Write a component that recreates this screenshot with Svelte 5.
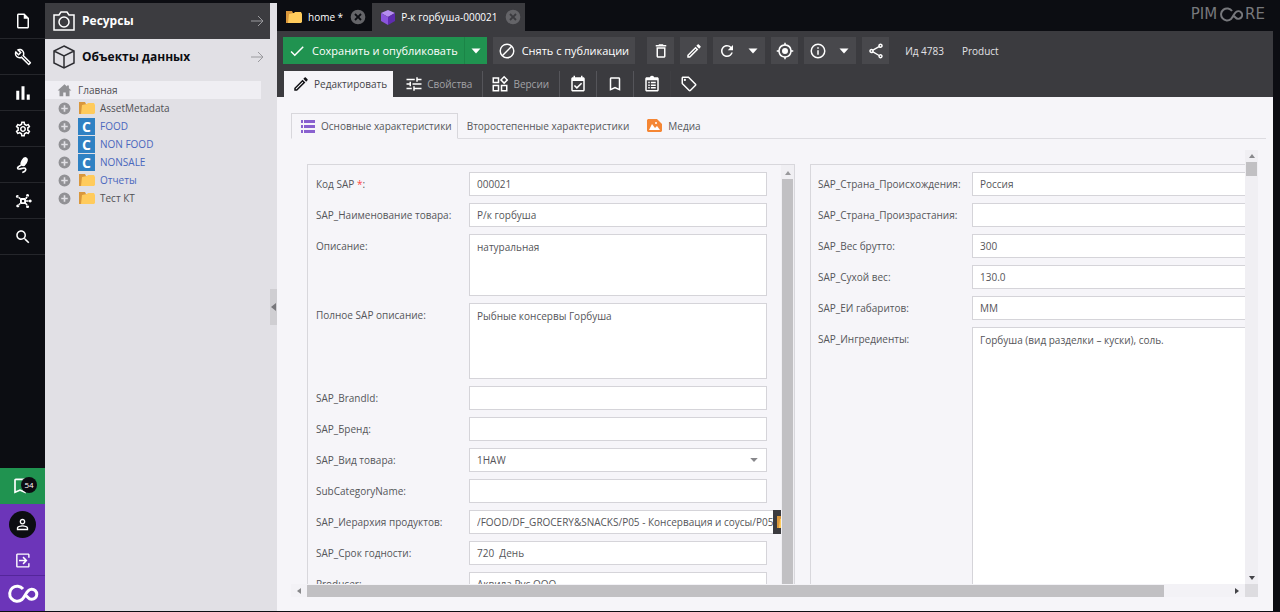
<script lang="ts">
	type Field = {
		id: string;
		label: string;
		value: string;
		kind?: 'text' | 'area' | 'select' | 'relation';
		size?: string;
		required?: boolean;
	};

	// 24x24 icon outlines
	const icons: Record<string, string> = {
		file: 'M14 2H6c-1.1 0-2 .9-2 2v16c0 1.1.9 2 2 2h12c1.1 0 2-.9 2-2V8l-6-6zM6 20V4h7v5h5v11H6z',
		wrench: 'M22.61 18.99l-9.08-9.08c.93-2.34.45-5.1-1.44-7C9.79.61 6.21.4 3.66 2.26L7.5 6.11 6.08 7.52 2.25 3.69C.39 6.23.6 9.82 2.9 12.11c1.86 1.86 4.57 2.35 6.89 1.48l9.11 9.11c.39.39 1.02.39 1.41 0l2.3-2.3c.4-.38.4-1.01 0-1.41zm-3 1.6l-9.46-9.46c-.61.45-1.29.72-2 .82-1.36.2-2.79-.21-3.83-1.25C3.37 9.76 2.93 8.5 3 7.26l3.09 3.09 4.24-4.24-3.09-3.09c1.24-.07 2.49.37 3.44 1.31 1.08 1.08 1.49 2.57 1.24 3.96-.12.71-.42 1.37-.88 1.96l9.45 9.45-.88.89z',
		chart: 'M3 9h4v12H3zM17 14h4v7h-4zM10 3h4v18h-4z',
		gear: 'M19.43 12.98c.04-.32.07-.64.07-.98 0-.34-.03-.66-.07-.98l2.11-1.65c.19-.15.24-.42.12-.64l-2-3.46c-.09-.16-.26-.25-.44-.25-.06 0-.12.01-.17.03l-2.49 1c-.52-.4-1.08-.73-1.69-.98l-.38-2.65C14.46 2.18 14.25 2 14 2h-4c-.25 0-.46.18-.49.42l-.38 2.65c-.61.25-1.17.59-1.69.98l-2.49-1c-.06-.02-.12-.03-.18-.03-.17 0-.34.09-.43.25l-2 3.46c-.13.22-.07.49.12.64l2.11 1.65c-.04.32-.07.65-.07.98 0 .33.03.66.07.98l-2.11 1.65c-.19.15-.24.42-.12.64l2 3.46c.09.16.26.25.44.25.06 0 .12-.01.17-.03l2.49-1c.52.4 1.08.73 1.69.98l.38 2.65c.03.24.24.42.49.42h4c.25 0 .46-.18.49-.42l.38-2.65c.61-.25 1.17-.59 1.69-.98l2.49 1c.06.02.12.03.18.03.17 0 .34-.09.43-.25l2-3.46c.12-.22.07-.49-.12-.64l-2.11-1.65zm-1.98-1.71c.04.31.05.52.05.73 0 .21-.02.43-.05.73l-.14 1.13.89.7 1.08.84-.7 1.21-1.27-.51-1.04-.42-.9.68c-.43.32-.84.56-1.25.73l-1.06.43-.16 1.13-.2 1.35h-1.4l-.19-1.35-.16-1.13-1.06-.43c-.43-.18-.83-.41-1.23-.71l-.91-.7-1.06.43-1.27.51-.7-1.21 1.08-.84.89-.7-.14-1.13c-.03-.31-.05-.54-.05-.74s.02-.43.05-.73l.14-1.13-.89-.7-1.08-.84.7-1.21 1.27.51 1.04.42.9-.68c.43-.32.84-.56 1.25-.73l1.06-.43.16-1.13.2-1.35h1.39l.19 1.35.16 1.13 1.06.43c.43.18.83.41 1.23.71l.91.7 1.06-.43 1.27-.51.7 1.21-1.07.85-.89.7.14 1.13zM12 8c-2.21 0-4 1.79-4 4s1.79 4 4 4 4-1.79 4-4-1.79-4-4-4zm0 6c-1.1 0-2-.9-2-2s.9-2 2-2 2 .9 2 2-.9 2-2 2z',
		hub: 'M8 8h8v8H8zM10.5 10.5v3h3v-3zM15 8l2-3 1.5 1L17 9.5zM7 9L4.5 7l1-1.5L9 8zM7.5 14.5L5 17l1.3 1L9 16zM15 16l2 3 1.5-1-1.5-3.5zM16 11h4v2h-4zM18 2.5a2 2 0 1 0 .1 0zM4.5 4a2 2 0 1 0 .1 0zM5 16.5a2 2 0 1 0 .1 0zM18 17.5a2 2 0 1 0 .1 0zM21.5 10a2 2 0 1 0 .1 0z',
		search: 'M15.5 14h-.79l-.28-.27C15.41 12.59 16 11.11 16 9.5 16 5.91 13.09 3 9.5 3S3 5.91 3 9.5 5.91 16 9.5 16c1.61 0 3.09-.59 4.23-1.57l.27.28v.79l5 4.99L20.49 19l-4.99-5zm-6 0C7.01 14 5 11.99 5 9.5S7.01 5 9.5 5 14 7.01 14 9.5 11.99 14 9.5 14z',
		person: 'M12 5.9a2.1 2.1 0 1 1 0 4.2 2.1 2.1 0 0 1 0-4.2m0 9c2.97 0 6.1 1.46 6.1 2.1v1.1H5.9V17c0-.64 3.13-2.1 6.1-2.1M12 4C9.79 4 8 5.79 8 8s1.79 4 4 4 4-1.79 4-4-1.79-4-4-4zm0 9c-2.67 0-8 1.34-8 4v3h16v-3c0-2.66-5.33-4-8-4z',
		logout: 'M5 2h15c1.1 0 2 .9 2 2v4h-2V4H5v16h15v-4h2v4c0 1.1-.9 2-2 2H5c-1.1 0-2-.9-2-2V4c0-1.1.9-2 2-2zM7 11h8l-3-3 1.5-1.5L19 12l-5.5 5.5L12 16l3-3H7z',
		check: 'M9 16.17L4.83 12l-1.42 1.41L9 19 21 7l-1.41-1.41z',
		block: 'M12 2a10 10 0 1 0 0 20 10 10 0 0 0 0-20zM4 12a8 8 0 0 1 12.9-6.31L5.69 16.9A7.9 7.9 0 0 1 4 12zm8 8a7.9 7.9 0 0 1-4.9-1.69L18.31 7.1A8 8 0 0 1 12 20z',
		trash: 'M6 19c0 1.1.9 2 2 2h8c1.1 0 2-.9 2-2V7H6v12zM8 9h8v10H8V9zm7.5-5l-1-1h-5l-1 1H5v2h14V4z',
		pencil: 'M14.06 9.02l.92.92L5.92 19H5v-.92l9.06-9.06M17.66 3c-.25 0-.51.1-.7.29l-1.83 1.83 3.75 3.75 1.83-1.83c.39-.39.39-1.02 0-1.41l-2.34-2.34c-.2-.2-.45-.29-.71-.29zm-3.6 3.19L3 17.25V21h3.75L17.81 9.94l-3.75-3.75z',
		refresh: 'M17.65 6.35A7.958 7.958 0 0 0 12 4c-4.42 0-7.99 3.58-7.99 8s3.57 8 7.99 8c3.73 0 6.84-2.55 7.73-6h-2.08A5.99 5.99 0 0 1 12 18c-3.31 0-6-2.69-6-6s2.69-6 6-6c1.66 0 3.14.69 4.22 1.78L13 11h7V4l-2.35 2.35z',
		target: 'M12 8a4 4 0 1 0 0 8 4 4 0 0 0 0-8zm8.94 3A8.994 8.994 0 0 0 13 3.06V1h-2v2.06A8.994 8.994 0 0 0 3.06 11H1v2h2.06A8.994 8.994 0 0 0 11 20.94V23h2v-2.06A8.994 8.994 0 0 0 20.94 13H23v-2h-2.06zM12 19a7 7 0 1 1 0-14 7 7 0 0 1 0 14z',
		info: 'M11 7h2v2h-2zm0 4h2v6h-2zm1-9a10 10 0 1 0 0 20 10 10 0 0 0 0-20zm0 18a8 8 0 1 1 0-16 8 8 0 0 1 0 16z',
		share: 'M18 16.08c-.76 0-1.44.3-1.96.77L8.91 12.7c.05-.23.09-.46.09-.7s-.04-.47-.09-.7l7.05-4.11c.54.5 1.25.81 2.04.81 1.66 0 3-1.34 3-3s-1.34-3-3-3-3 1.34-3 3c0 .24.04.47.09.7L8.04 9.81C7.5 9.31 6.79 9 6 9c-1.66 0-3 1.34-3 3s1.34 3 3 3c.79 0 1.5-.31 2.04-.81l7.12 4.16c-.05.21-.08.43-.08.65 0 1.61 1.31 2.92 2.92 2.92s2.92-1.31 2.92-2.92-1.31-2.92-2.92-2.92zM18 4a1 1 0 1 1 0 2 1 1 0 0 1 0-2zM6 13a1 1 0 1 1 0-2 1 1 0 0 1 0 2zm12 7a1 1 0 1 1 0-2 1 1 0 0 1 0 2z',
		tune: 'M2 17v2h7v-2H2zM2 5v2h11V5H2zm11 16v-2h9v-2h-9v-2h-2v6h2zM6 9v2H2v2h4v2h2V9H6zm16 4v-2H10v2h12zm-7-4h2V7h5V5h-5V3h-2v6z',
		widgets: 'M17.5 1L11.9 6.6l5.6 5.6 5.6-5.6L17.5 1zm0 2.8l2.8 2.8-2.8 2.8-2.8-2.8zM2 3v8h9V3H2zm2 2h5v4H4zM2 13v9h9v-9H2zm2 2h5v5H4zM13 13v9h9v-9h-9zm2 2h5v5h-5z',
		calendar: 'M19 3h-1V1h-2v2H8V1H6v2H5c-1.1 0-2 .9-2 2v15c0 1.1.9 2 2 2h14c1.1 0 2-.9 2-2V5c0-1.1-.9-2-2-2zm0 17H5V8h14v12zM10.5 18.6l7-7-1.4-1.4-5.6 5.6-2.6-2.6-1.4 1.4z',
		bookmark: 'M17 3H7c-1.1 0-2 .9-2 2v16l7-3 7 3V5c0-1.1-.9-2-2-2zm0 15l-5-2.18L7 18V5h10v13z',
		clipboard: 'M19 3h-4.18a3 3 0 0 0-5.64 0H5c-1.1 0-2 .9-2 2v15c0 1.1.9 2 2 2h14c1.1 0 2-.9 2-2V5c0-1.1-.9-2-2-2zm0 17H5V7h14zM7 9h2v2H7zm3.5 0H17v2h-6.5zM7 12.5h2v2H7zm3.5 0H17v2h-6.5zM7 16h2v2H7zm3.5 0H17v2h-6.5z',
		tag: 'M21.41 11.58l-9-9C12.05 2.22 11.55 2 11 2H4c-1.1 0-2 .9-2 2v7c0 .55.22 1.05.59 1.42l9 9c.36.36.86.58 1.41.58s1.05-.22 1.41-.59l7-7c.37-.36.59-.86.59-1.41s-.23-1.06-.59-1.42zM13 20.01L4 11V4h7v-.01l9 9-7 7.02zM6.5 5a1.5 1.5 0 1 0 0 3 1.5 1.5 0 0 0 0-3z',
		home: 'M12 2L1 12h3v9h6v-6h4v6h6v-9h3l-4-3.6V4h-3v1.7z',
		plus: 'M12 1a11 11 0 1 0 0 22 11 11 0 0 0 0-22zm6 12.5h-4.5V18h-3v-4.5H6v-3h4.5V6h3v4.5H18z',
		close: 'M12 1a11 11 0 1 0 0 22 11 11 0 0 0 0-22zm5.5 14.5l-2 2L12 14l-3.5 3.5-2-2L10 12 6.5 8.5l2-2L12 10l3.5-3.5 2 2L14 12z',
		down: 'M3 7h18l-9 10z'
	};

	const rail = [
		['file', 'Документы'],
		['wrench', 'Инструменты'],
		['chart', 'Маркетинг'],
		['gear', 'Настройки'],
		['plug', 'Расширения'],
		['hub', 'Datahub'],
		['search', 'Поиск']
	];

	const tree = [
		{ name: 'AssetMetadata', folder: true, link: false },
		{ name: 'FOOD', folder: false, link: true },
		{ name: 'NON FOOD', folder: false, link: true },
		{ name: 'NONSALE', folder: false, link: true },
		{ name: 'Отчеты', folder: true, link: true },
		{ name: 'Тест КТ', folder: true, link: false }
	];

	const iconTabs = [
		['calendar', 'Расписание'],
		['bookmark', 'Закладки'],
		['clipboard', 'Заметки'],
		['tag', 'Теги']
	];

	const mainFields: Field[] = [
		{ id: 'sap-code', label: 'Код SAP', value: '000021', required: true },
		{ id: 'sap-name', label: 'SAP_Наименование товара', value: 'Р/к горбуша' },
		{ id: 'descr', label: 'Описание', value: 'натуральная', kind: 'area', size: 'short' },
		{ id: 'full-descr', label: 'Полное SAP описание', value: 'Рыбные консервы Горбуша', kind: 'area', size: 'medium' },
		{ id: 'brand-id', label: 'SAP_BrandId', value: '' },
		{ id: 'brand', label: 'SAP_Бренд', value: '' },
		{ id: 'kind', label: 'SAP_Вид товара', value: '1HAW', kind: 'select' },
		{ id: 'subcat', label: 'SubCategoryName', value: '' },
		{ id: 'hierarchy', label: 'SAP_Иерархия продуктов', value: '/FOOD/DF_GROCERY&SNACKS/P05 - Консервация и соусы/P05 -', kind: 'relation' },
		{ id: 'shelf-life', label: 'SAP_Срок годности', value: '720  День' },
		{ id: 'producer', label: 'Producer', value: 'Аквила Рус ООО' }
	];

	const sideFields: Field[] = [
		{ id: 'origin', label: 'SAP_Страна_Происхождения', value: 'Россия' },
		{ id: 'growth', label: 'SAP_Страна_Произрастания', value: '' },
		{ id: 'gross', label: 'SAP_Вес брутто', value: '300' },
		{ id: 'dry', label: 'SAP_Сухой вес', value: '130.0' },
		{ id: 'unit', label: 'SAP_ЕИ габаритов', value: 'ММ' },
		{ id: 'ingredients', label: 'SAP_Ингредиенты', value: 'Горбуша (вид разделки – куски), соль.', kind: 'area', size: 'tall' }
	];
</script>

{#snippet icon(name: string, size = 18)}
	<svg width={size} height={size} viewBox="0 0 24 24" fill="currentColor" fill-rule="evenodd" aria-hidden="true">
		{#if name === 'plug'}
			<ellipse cx="13.5" cy="7.5" rx="4" ry="6.5" transform="rotate(30 13.5 7.5)" />
			<path d="M10 12c-4 2-6 3-5 5s8-2.5 10-.5-.5 5-4 5.5" fill="none" stroke="currentColor" stroke-width="2.2" />
		{:else}
			<path d={icons[name]} />
		{/if}
	</svg>
{/snippet}

{#snippet folder()}
	<svg width="18" height="16" viewBox="0 0 18 16" aria-hidden="true">
		<path d="M1 2h6l1 2h7v10H1z" fill="#d9973c" />
		<path d="M4 5l5-1 1-1h6l1 2v8l-1 1H3z" fill="#ffcb5c" />
	</svg>
{/snippet}

{#snippet arrow()}
	<svg class="arrow" width="14" height="14" viewBox="0 0 14 14" fill="none" stroke="currentColor" aria-hidden="true">
		<path d="M1 7h12M8 2l5 5-5 5" />
	</svg>
{/snippet}

{#snippet field(f: Field)}
	<div class="field">
		<label for={f.id}>{f.label}{#if f.required}&nbsp;<span class="required">*</span>{/if}:</label>
		{#if f.kind === 'area'}
			<textarea id={f.id} class={f.size} value={f.value}></textarea>
		{:else if f.kind === 'select'}
			<div class="select">
				<select id={f.id}><option>{f.value}</option></select>
				<span class="caret">{@render icon('down', 10)}</span>
			</div>
		{:else if f.kind === 'relation'}
			<input id={f.id} class="relation" type="text" value={f.value} />
			<button class="open" aria-label="Открыть">{@render folder()}</button>
		{:else}
			<input id={f.id} type="text" value={f.value} />
		{/if}
	</div>
{/snippet}

<div class="app">
	<nav class="rail">
		{#each rail as [name, title]}
			<button class="rail-item" aria-label={title}>{@render icon(name)}</button>
		{/each}
		<div class="rail-bottom">
			<button class="notify" aria-label="Уведомления">
				{@render icon('bookmark', 20)}
				<span class="badge">54</span>
			</button>
			<button class="user" aria-label="Профиль"><span class="avatar">{@render icon('person', 17)}</span></button>
			<button class="logout" aria-label="Выход">{@render icon('logout', 17)}</button>
			<button class="brand" aria-label="Pimcore">
				<svg width="32" height="20" viewBox="0 0 32 20" fill="none" stroke="#fff" stroke-width="3">
					<path d="M16 5A7.5 7.5 0 1 0 15 15.5C17 14 19 9 21 7A5 5 0 1 1 21 13.5L18.5 11" />
				</svg>
			</button>
		</div>
	</nav>

	<aside class="sidebar">
		<button class="panel-head dark">
			<svg width="22" height="22" viewBox="0 0 22 22" fill="none" stroke="#fff" stroke-width="1.5" aria-hidden="true">
				<path d="M1 5h5l2-3h6l2 3h5v15H1z" />
				<circle cx="11" cy="12" r="5" />
			</svg>
			<span>Ресурсы</span>
			{@render arrow()}
		</button>
		<button class="panel-head">
			<svg width="22" height="24" viewBox="0 0 22 24" fill="none" stroke="#2e2e33" stroke-width="1.5" aria-hidden="true">
				<path d="M11 1l10 5v12l-10 5L1 18V6zM1 6l10 5 10-5M11 11v12" />
			</svg>
			<span>Объекты данных</span>
			{@render arrow()}
		</button>
		<ul class="tree">
			<li class="root"><span class="grey">{@render icon('home', 15)}</span><a href="#home">Главная</a></li>
			{#each tree as node}
				<li>
					<span class="grey">{@render icon('plus', 13)}</span>
					{#if node.folder}
						<span class="node-icon">{@render folder()}</span>
					{:else}
						<span class="node-icon class-icon">C</span>
					{/if}
					<a href="#{node.name}" class:link={node.link}>{node.name}</a>
				</li>
			{/each}
		</ul>
		<button class="collapse" aria-label="Свернуть">
			<svg width="5" height="8" viewBox="0 0 5 8"><path d="M5 0v8L0 4z" fill="#77777b" /></svg>
		</button>
	</aside>

	<main class="workspace">
		<header class="tabs">
			<div class="doc-tab">
				{@render folder()}<span>home *</span>
				<button aria-label="Закрыть">{@render icon('close', 16)}</button>
			</div>
			<div class="doc-tab active">
				<svg width="16" height="16" viewBox="0 0 16 16" aria-hidden="true">
					<path d="M8 1l7 3-7 4-7-4z" fill="#b58df0" />
					<path d="M1 4l7 4v8l-7-4z" fill="#8a54dc" />
					<path d="M15 4L8 8v8l7-4z" fill="#5f2bb0" />
				</svg>
				<span>Р-к горбуша-000021</span>
				<button aria-label="Закрыть">{@render icon('close', 16)}</button>
			</div>
			<div class="logo">
				<span>PIM</span>
				<svg width="24" height="15" viewBox="0 0 24 15" fill="none" stroke="currentColor" stroke-width="2">
					<path d="M13 4A6 6 0 1 0 12 12C14 10 15 6.5 17 5A3.8 3.8 0 1 1 16.5 10.5L14.5 8.5" />
				</svg>
				<span>RE</span>
			</div>
		</header>

		<div class="toolbar">
			<div class="actions">
				<div class="group save">
					<button class="wide">{@render icon('check')}<span>Сохранить и опубликовать</span></button>
					<button class="drop" aria-label="Ещё">{@render icon('down', 12)}</button>
				</div>
				<button class="tool text">{@render icon('block')}<span>Снять с публикации</span></button>
				<div class="tools">
					<button class="tool" aria-label="Удалить">{@render icon('trash')}</button>
					<button class="tool" aria-label="Переименовать">{@render icon('pencil')}</button>
					<div class="group">
						<button class="tool" aria-label="Обновить">{@render icon('refresh')}</button>
						<button class="tool more" aria-label="Ещё">{@render icon('down', 12)}</button>
					</div>
					<button class="tool" aria-label="Показать в дереве">{@render icon('target')}</button>
					<div class="group">
						<button class="tool" aria-label="Информация">{@render icon('info')}</button>
						<button class="tool more" aria-label="Ещё">{@render icon('down', 12)}</button>
					</div>
					<button class="tool" aria-label="Поделиться">{@render icon('share')}</button>
				</div>
				<span class="meta">Ид 4783</span>
				<span class="meta">Product</span>
			</div>
			<div class="views">
				<button class="view current">{@render icon('pencil')}<span>Редактировать</span></button>
				<button class="view props">{@render icon('tune')}<span>Свойства</span></button>
				<button class="view versions">{@render icon('widgets')}<span>Версии</span></button>
				{#each iconTabs as [name, title]}
					<button class="view small" aria-label={title}>{@render icon(name)}</button>
				{/each}
			</div>
		</div>

		<section class="content">
			<div class="subtabs">
				<button class="subtab current">
					<svg width="14" height="13" viewBox="0 0 14 13" aria-hidden="true">
						<path d="M0 0h2v3H0zM3 0h11v3H3zM0 5h2v3H0zM3 5h11v3H3zM0 10h2v3H0zM3 10h11v3H3z" fill="#8961cf" />
					</svg>
					<span>Основные характеристики</span>
				</button>
				<button class="subtab"><span>Второстепенные характеристики</span></button>
				<button class="subtab">
					<svg width="15" height="13" viewBox="0 0 15 13" aria-hidden="true">
						<path d="M1 0h9l5 5v7l-1 1H1l-1-1V1z" fill="#f58634" />
						<path d="M2 11l3-6 3 4 2-2 3 4z" fill="#fff" />
						<circle cx="9" cy="4" r="1" fill="#fff" />
					</svg>
					<span>Медиа</span>
				</button>
			</div>

			<div class="scroller">
				<div class="panels">
					<form class="panel main-panel">
						<div class="fields">
							{#each mainFields as f}{@render field(f)}{/each}
						</div>
						<div class="vbar inner">
							<svg width="6" height="4" viewBox="0 0 6 4"><path d="M0 4h6L3 0z" fill="#99999c" /></svg>
							<div class="thumb"></div>
						</div>
					</form>
					<form class="panel side-panel">
						<div class="fields">
							{#each sideFields as f}{@render field(f)}{/each}
						</div>
					</form>
				</div>
				<div class="vbar outer">
					<svg width="6" height="4" viewBox="0 0 6 4"><path d="M0 4h6L3 0z" fill="#88888b" /></svg>
					<div class="thumb"></div>
					<svg width="6" height="4" viewBox="0 0 6 4"><path d="M0 0h6L3 4z" fill="#444448" /></svg>
				</div>
				<div class="hbar">
					<svg width="4" height="6" viewBox="0 0 4 6"><path d="M4 0v6L0 3z" fill="#88888b" /></svg>
					<div class="track"><div class="thumb"></div></div>
					<svg width="4" height="6" viewBox="0 0 4 6"><path d="M0 0v6l4-3z" fill="#444448" /></svg>
				</div>
				<div class="corner"></div>
			</div>
		</section>
	</main>
</div>

<style>
	:global(body) {
		background: #0c0d12;
	}

	.app {
		display: flex;
		height: 100vh;
		box-sizing: border-box;
		padding: 3px 7px 1px 0;
		background: #0c0d12;
		color: #555559;
		font-family: 'Open Sans', 'Noto Sans', sans-serif;
		font-size: 10px;
		line-height: 16px;
		overflow: hidden;
	}

	button,
	input,
	select,
	textarea {
		box-sizing: border-box;
		margin: 0;
		padding: 0;
		border: 0;
		border-radius: 0;
		background: none;
		color: inherit;
		font: inherit;
	}

	button {
		display: flex;
		align-items: center;
		flex-shrink: 0;
		cursor: pointer;
		white-space: nowrap;
	}

	svg {
		display: block;
		flex-shrink: 0;
	}

	/* left icon rail */
	.rail {
		display: flex;
		flex-direction: column;
		width: 45px;
		flex-shrink: 0;
		color: #fff;
	}

	.rail button {
		justify-content: center;
		width: 100%;
		height: 36px;
	}

	.rail .rail-item {
		border-bottom: 1px solid #25262b;
	}

	.rail-bottom {
		margin-top: auto;
		background: #6c35b9;
	}

	.rail .notify {
		position: relative;
		justify-content: flex-start;
		padding-left: 10px;
		background: #209350;
	}

	.badge {
		position: absolute;
		left: 21px;
		top: 9px;
		width: 16px;
		border-radius: 8px;
		background: #0c0d12;
		font-size: 8px;
		line-height: 16px;
		text-align: center;
	}

	.rail .user {
		height: 41px;
	}

	.avatar {
		display: flex;
		align-items: center;
		justify-content: center;
		width: 27px;
		height: 27px;
		border-radius: 50%;
		background: #0c0d12;
	}

	.rail .logout {
		height: 30px;
	}

	.rail .brand {
		border-top: 1px solid #54269a;
	}

	/* tree */
	.sidebar {
		position: relative;
		width: 232px;
		flex-shrink: 0;
		background: #e1e0e5;
	}

	.panel-head {
		width: 225px;
		height: 36px;
		padding: 0 6px 0 8px;
		gap: 7px;
		color: #0c0d12;
		font-size: 12px;
		font-weight: 700;
	}

	.panel-head.dark {
		background: #3c3c40;
		color: #fff;
	}

	.arrow {
		margin-left: auto;
		color: #9a9a9e;
	}

	.tree {
		margin: 6px 16px 0 0;
		padding: 0;
		list-style: none;
	}

	.tree li {
		display: flex;
		align-items: center;
		height: 18px;
		padding-left: 12px;
	}

	.tree .root {
		background: #efeef3;
	}

	.tree a {
		color: #4f4f53;
		text-decoration: none;
	}

	.tree a.link {
		color: #4a67bd;
	}

	.grey {
		display: flex;
		justify-content: center;
		width: 14px;
		margin-right: 7px;
		color: #919195;
	}

	.node-icon {
		display: flex;
		justify-content: center;
		width: 17px;
		margin-right: 5px;
	}

	.class-icon {
		background: #2f81c3;
		color: #fff;
		font-size: 14px;
		font-weight: 700;
		line-height: 17px;
	}

	.collapse {
		position: absolute;
		right: 0;
		top: 286px;
		justify-content: center;
		width: 7px;
		height: 36px;
		background: #cfced2;
	}

	/* open documents */
	.workspace {
		display: flex;
		flex-direction: column;
		flex: 1;
		min-width: 0;
	}

	.tabs {
		display: flex;
		height: 28px;
		color: #fff;
	}

	.doc-tab {
		display: flex;
		align-items: center;
		padding: 0 6px 0 8px;
		gap: 5px;
	}

	.doc-tab.active {
		padding: 0 4px 0 8px;
		background: #3b3b3f;
	}

	.doc-tab button {
		margin-left: 2px;
		color: #646468;
	}

	.logo {
		display: flex;
		align-items: center;
		gap: 2px;
		height: 22px;
		margin-left: auto;
		padding-right: 8px;
		color: #77787c;
		font-family: 'DejaVu Sans', sans-serif;
		font-size: 15px;
	}

	.toolbar {
		background: #3b3b3f;
		color: #fff;
	}

	.actions {
		display: flex;
		align-items: center;
		gap: 6px;
		padding: 6px 6px 7px;
	}

	.group,
	.tools {
		display: flex;
	}

	.tools {
		gap: 6px;
		margin: 0 10px 0 6px;
	}

	.save {
		background: #209350;
	}

	.wide {
		height: 27px;
		padding: 0 6px 0 5px;
		gap: 6px;
		font-size: 11px;
	}

	.drop {
		justify-content: center;
		width: 23px;
		border-left: 1px solid #1b8547;
	}

	.tool {
		justify-content: center;
		width: 27px;
		height: 27px;
		background: #48484c;
	}

	.tool.more {
		width: 25px;
	}

	.tool.text {
		width: auto;
		padding: 0 6px 0 5px;
		gap: 6px;
		font-size: 11px;
	}

	.meta {
		margin-right: 12px;
		color: #e2e2e6;
	}

	.views {
		display: flex;
		padding-left: 7px;
	}

	.view {
		height: 26px;
		gap: 4px;
		color: #a2a2a6;
	}

	.view.current {
		padding: 0 6px 0 8px;
		background: #f6f5f9;
		color: #444448;
	}

	.view :global(svg) {
		color: #fff;
	}

	.view.current :global(svg) {
		color: #111115;
	}

	.props {
		padding: 0 10px 0 12px;
	}

	.versions {
		padding: 0 10px 0 8px;
		border-left: 1px solid #55555a;
	}

	.small {
		justify-content: center;
		width: 37px;
		border-left: 1px solid #55555a;
	}

	.small:last-child {
		border-color: #3f3f43;
	}

	/* form area */
	.content {
		display: flex;
		flex-direction: column;
		flex: 1;
		min-height: 0;
		padding: 16px 15px 14px 14px;
		background: #f6f5f9;
	}

	.subtabs {
		display: flex;
		height: 25px;
		margin-right: -8px;
		border-bottom: 1px solid #dddce1;
	}

	.subtab {
		padding: 0 9px;
		gap: 6px;
	}

	.subtab.current {
		height: 26px;
		padding: 0 5px 0 9px;
		border: 1px solid #d8d7dc;
		border-bottom-color: #f6f5f9;
		background: #f6f5f9;
	}

	.scroller {
		display: grid;
		grid-template-columns: 1fr 13px;
		grid-template-rows: 1fr 13px;
		flex: 1;
		min-height: 0;
		margin-top: 11px;
	}

	.panels {
		display: flex;
		gap: 15px;
		min-width: 0;
		min-height: 0;
		padding: 14px 0 0 16px;
		overflow: hidden;
	}

	.panel {
		display: flex;
		min-height: 0;
		border: 1px solid #d8d7dc;
		border-bottom: 0;
		overflow: hidden;
	}

	.main-panel {
		width: 486px;
		flex-shrink: 0;
	}

	.side-panel {
		flex: 1;
		min-width: 0;
		border-right: 0;
	}

	.fields {
		display: flex;
		flex-direction: column;
		flex: 1;
		gap: 7px;
		min-width: 0;
		padding: 7px 0 0 8px;
		overflow: hidden;
	}

	.side-panel .fields {
		padding-left: 7px;
	}

	.field {
		display: flex;
		flex-shrink: 0;
	}

	label {
		width: 153px;
		flex-shrink: 0;
		padding-top: 4px;
	}

	.side-panel label {
		width: 154px;
	}

	.required {
		color: #f44;
	}

	.main-panel input,
	.main-panel textarea,
	.select {
		width: 298px;
	}

	.side-panel input,
	.side-panel textarea {
		flex: 1;
		min-width: 0;
		border-right: 0;
	}

	input,
	select,
	textarea {
		height: 24px;
		padding: 0 7px;
		border: 1px solid #d5d4d9;
		background: #fff;
	}

	textarea {
		display: block;
		padding-top: 4px;
		resize: none;
		overflow: hidden;
	}

	.short {
		height: 62px;
	}

	.medium {
		height: 76px;
	}

	.tall {
		height: 300px;
	}

	.select {
		position: relative;
	}

	select {
		width: 100%;
		appearance: none;
	}

	.caret {
		position: absolute;
		right: 8px;
		top: 7px;
		color: #87878b;
		pointer-events: none;
	}

	.main-panel .relation {
		width: 304px;
		flex-shrink: 0;
		padding-right: 0;
		border-right: 0;
	}

	.open {
		width: 24px;
		height: 24px;
		padding-left: 3px;
		background: #3b3b3f;
	}

	/* scrollbars */
	.vbar {
		display: flex;
		flex-direction: column;
		align-items: center;
		flex-shrink: 0;
		width: 13px;
		background: #f0eff3;
	}

	.inner svg {
		margin: 6px 0 4px;
	}

	.inner .thumb {
		flex: 1;
		width: 11px;
		background: #c1c0c3;
	}

	.outer svg {
		margin: 4px 0;
	}

	.outer .thumb {
		width: 11px;
		height: 14px;
		margin-bottom: auto;
		background: #c1c0c3;
	}

	.hbar {
		display: flex;
		align-items: center;
		padding: 0 6px;
		gap: 6px;
		background: #f3f2f6;
	}

	.track {
		flex: 1;
	}

	.hbar .thumb {
		width: 93%;
		height: 12px;
		background: #c1c0c3;
	}

	.corner {
		background: #dddce0;
	}
</style>
